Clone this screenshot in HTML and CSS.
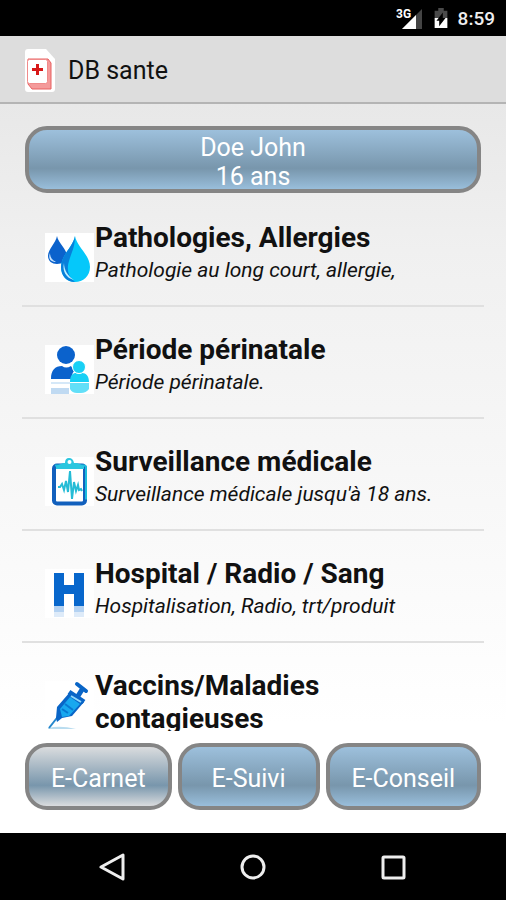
FILE: index.html
```
<!DOCTYPE html>
<html lang="fr">
<head>
    <meta charset="UTF-8">
    <meta name="viewport" content="width=device-width, initial-scale=1.0">
    <title>DB sante</title>
    <link rel="stylesheet" href="styles.css">
</head>
<body>

    <!-- Status bar -->
    <div class="status-bar">
        <svg class="signal" viewBox="0 0 28 24" aria-hidden="true">
            <path d="M26 3v20H6z" fill="#444"/>
            <path d="M20 9v14H6z" fill="#fff"/>
            <text x="0" y="12" class="network">3G</text>
        </svg>
        <svg class="battery" viewBox="0 0 14 22" aria-hidden="true">
            <path d="M4 0h6v3h4v8H0V3h4z" fill="#4a4a4a"/>
            <path d="M0 11h14v11H0z" fill="#fff"/>
            <path d="M9 5v6h3l-7 9v-6H2z" fill="#000"/>
        </svg>
        <span class="clock">8:59</span>
    </div>

    <header class="app-bar">
        <svg class="app-icon" viewBox="0 0 30 43" aria-hidden="true">
            <path d="M3 0h18l9 10v30q0 3-3 3H3q-3 0-3-3V3q0-3 3-3z" fill="#fff"/>
            <path d="M3 10h20l3 4v26H7l-4-5z" fill="#f49a9a" stroke="#e86060"/>
            <rect x="2.500" y="10.500" width="20" height="24" rx="2" fill="#fff" stroke="#f08a8a"/>
            <path d="M12.500 15v11M7 20.500h11" stroke="#d81818" stroke-width="3"/>
        </svg>
        <h1>DB sante</h1>
    </header>

    <main class="content">
        <button class="glossy-btn patient-btn">Doe John<br>16 ans</button>

        <ul class="menu">
            <li>
                <svg class="menu-icon" viewBox="0 0 49 49" aria-hidden="true">
                    <rect width="49" height="49" fill="#fff"/>
                    <path d="M12 3C11 10 3 16 3 23c0 5 4 8 9 8s10-3 10-8C22 16 13 10 12 3z" fill="#0b62cc"/>
                    <path d="M5 20c-2 5 0 9 6 9-4-2-6-5-6-9z" fill="#c8e4ff"/>
                    <path d="M30 3C28 14 16 22 16 34c0 9 6 15 14 15s15-6 15-15C45 22 32 14 30 3z" fill="#05c8fa"/>
                    <path d="M30 3C28 14 16 22 16 34c0 9 6 15 14 15-6-5-9-11-6-21 2-8 6-13 6-25z" fill="#087fda"/>
                    <path d="M19 30c-2 8 2 15 10 17-6-4-10-10-10-17z" fill="#bdefff"/>
                </svg>
                <div class="menu-text">
                    <h2>Pathologies, Allergies</h2>
                    <p>Pathologie au long court, allergie,</p>
                </div>
            </li>
            <li>
                <svg class="menu-icon" viewBox="0 0 49 49" aria-hidden="true">
                    <rect width="49" height="49" fill="#fff"/>
                    <circle cx="21" cy="10" r="9" fill="#0b62cc"/>
                    <path d="M6 34c0-9 4-13 11-13q4 3 9 0l3 5q-3 4-2 8z" fill="#0b62cc"/>
                    <path d="M6 38h19" stroke="#d5e8f8" stroke-width="2"/>
                    <path d="M6 43h18v6H6z" fill="#c0daf2"/>
                    <path d="M25 37c0-7 3-9 6-9q3 2 6 0c4 0 7 3 7 9z" fill="#18d0f5"/>
                    <path d="M25 38h19v6q-3 4-8 4h-4q-5 0-7-4z" fill="#62dff8"/>
                    <circle cx="34" cy="22" r="6.500" fill="#18d0f5" stroke="#fff"/>
                </svg>
                <div class="menu-text">
                    <h2>Période périnatale</h2>
                    <p>Période périnatale.</p>
                </div>
            </li>
            <li>
                <svg class="menu-icon" viewBox="0 0 49 49" aria-hidden="true">
                    <rect width="49" height="49" fill="#fff"/>
                    <rect x="9" y="8.500" width="31" height="38" rx="3" fill="#fff" stroke="#1260bd" stroke-width="4"/>
                    <path d="M10 8.500h29q2 0 2 2v32" fill="none" stroke="#1bbbdc" stroke-width="2"/>
                    <path d="M11 12V9l7-3h2q0-5 4-5t5 5h3l7 3v3z" fill="#2bc6df"/>
                    <circle cx="24.500" cy="5" r="2" fill="#fff"/>
                    <path d="M13 30h2l2-3 2 6 2-9 2 11 2-21 2 28 2-17 2 9 2-6 1 5 2-1 1 2" fill="none" stroke="#24bcd6" stroke-width="2"/>
                </svg>
                <div class="menu-text">
                    <h2>Surveillance médicale</h2>
                    <p>Surveillance médicale jusqu'à 18 ans.</p>
                </div>
            </li>
            <li>
                <svg class="menu-icon" viewBox="0 0 49 49" aria-hidden="true">
                    <rect width="49" height="49" fill="#fff"/>
                    <path d="M9 4h10v12h10V4h10v33H29V25H19v12H9z" fill="#0867cc"/>
                    <path d="M9 37h10v6H9zM29 37h10v6H29z" fill="#b4d2f2"/>
                    <path d="M9 43h10v5H9zM29 43h10v5H29z" fill="#deebf9"/>
                </svg>
                <div class="menu-text">
                    <h2>Hospital / Radio / Sang</h2>
                    <p>Hospitalisation, Radio, trt/produit</p>
                </div>
            </li>
            <li>
                <svg class="menu-icon" viewBox="0 0 49 49" aria-hidden="true">
                    <rect width="49" height="49" fill="#fff"/>
                    <path d="M3 47q12-3 28 1H3z" fill="#b9dcef"/>
                    <path d="M4 47l11-14" stroke="#2486cc" stroke-width="2"/>
                    <path d="M11 37l1-11L25 11l14 10-12 14-10 2-5 4z" fill="#0965c7"/>
                    <path d="M15 28l10-12 10 7-11 12-7 1z" fill="#18a8ef"/>
                    <path d="M20 23l8 6M17 28l6 4" stroke="#0879d2" stroke-width="2"/>
                    <path d="M24 11l15 10M33 15l5-8" stroke="#0965c7" stroke-width="5"/>
                    <path d="M32 3l9 7" stroke="#0965c7" stroke-width="4" stroke-linecap="round"/>
                    <path d="M26 15l10 6" stroke="#8fd8fa" stroke-width="2"/>
                </svg>
                <div class="menu-text">
                    <h2>Vaccins/Maladies contagieuses</h2>
                </div>
            </li>
        </ul>

        <div class="tabs">
            <button class="glossy-btn active">E-Carnet</button>
            <button class="glossy-btn">E-Suivi</button>
            <button class="glossy-btn">E-Conseil</button>
        </div>
    </main>

    <!-- System navigation -->
    <nav class="nav-bar">
        <button aria-label="Retour">
            <svg viewBox="0 0 28 28"><path d="M24 2v24L2 14z"/></svg>
        </button>
        <button aria-label="Accueil">
            <svg viewBox="0 0 28 28"><circle cx="14" cy="14" r="11"/></svg>
        </button>
        <button aria-label="Applications">
            <svg viewBox="0 0 28 28"><rect x="4" y="4" width="21" height="21" rx="1"/></svg>
        </button>
    </nav>

</body>
</html>
```
FILE: styles.css
```
* { margin: 0; padding: 0; box-sizing: border-box; font-family: Roboto, sans-serif; }
body {
    display: flex;
    flex-direction: column;
    height: 100vh;
    background: #000;
    color: #111;
}

/* Status bar */
.status-bar {
    display: flex;
    align-items: center;
    justify-content: flex-end;
    height: 36px;
    padding-right: 11px;
    background: #000;
}
.signal {
    width: 28px;
    height: 24px;
    margin-right: 10px;
}
.network {
    font-size: 12px;
    font-weight: bold;
    fill: #fff;
    stroke: #000;
    stroke-width: 2px;
    paint-order: stroke;
}
.battery {
    width: 14px;
    height: 20px;
    margin-right: 10px;
}
.clock {
    color: #eee;
    font-size: 19px;
    font-weight: 500;
}

.app-bar {
    display: flex;
    align-items: center;
    height: 68px;
    padding: 2px 25px 0;
    background: #ddd;
    border-bottom: 2px solid #b4b4b4;
}
.app-icon {
    width: 30px;
    height: 43px;
    margin-right: 13px;
}
h1 {
    font-size: 25px;
    font-weight: normal;
}

.content {
    display: flex;
    flex: 1;
    flex-direction: column;
    min-height: 0;
    padding: 22px 22px 23px;
    background: linear-gradient(#e8e8e8, #f0f0f0 20%, #fff 85%);
}

/* Glossy buttons */
.glossy-btn {
    height: 67px;
    padding-top: 3px;
    border: 4px solid #858585;
    border-radius: 22px;
    background: linear-gradient(#9dc0dc, #7896ac 65%, #99bedb);
    color: #fff;
    font-size: 25px;
    line-height: 29px;
    cursor: pointer;
}
.glossy-btn.active {
    background: linear-gradient(#dadcde, #7896ac 65%, #dadcde);
}
.patient-btn {
    flex-shrink: 0;
    margin: 0 3px 2px;
}

.menu {
    flex: 1;
    min-height: 0;
    margin-bottom: 12px;
    overflow: hidden;
    list-style: none;
}
.menu li {
    display: flex;
    height: 112px;
    padding: 26px 0 0 23px;
    border-bottom: 2px solid #e0e0e0;
}
.menu-icon {
    flex-shrink: 0;
    width: 49px;
    height: 49px;
    margin-top: 12px;
}
.menu-text {
    max-width: 360px;
    padding-left: 1px;
}
h2 {
    font-size: 28px;
    font-weight: bold;
    line-height: 33px;
}
p {
    font-size: 21px;
    font-style: italic;
    line-height: 32px;
}

.tabs {
    display: grid;
    grid-template-columns: 33fr 32fr 35fr;
    gap: 6px;
    margin: 0 3px;
}

/* System navigation */
.nav-bar {
    display: flex;
    align-items: center;
    justify-content: center;
    gap: 112px;
    height: 67px;
}
.nav-bar button {
    width: 28px;
    height: 28px;
    border: none;
    background: none;
}
.nav-bar svg {
    display: block;
    fill: none;
    stroke: #eee;
    stroke-width: 3px;
    stroke-linejoin: round;
}
```
